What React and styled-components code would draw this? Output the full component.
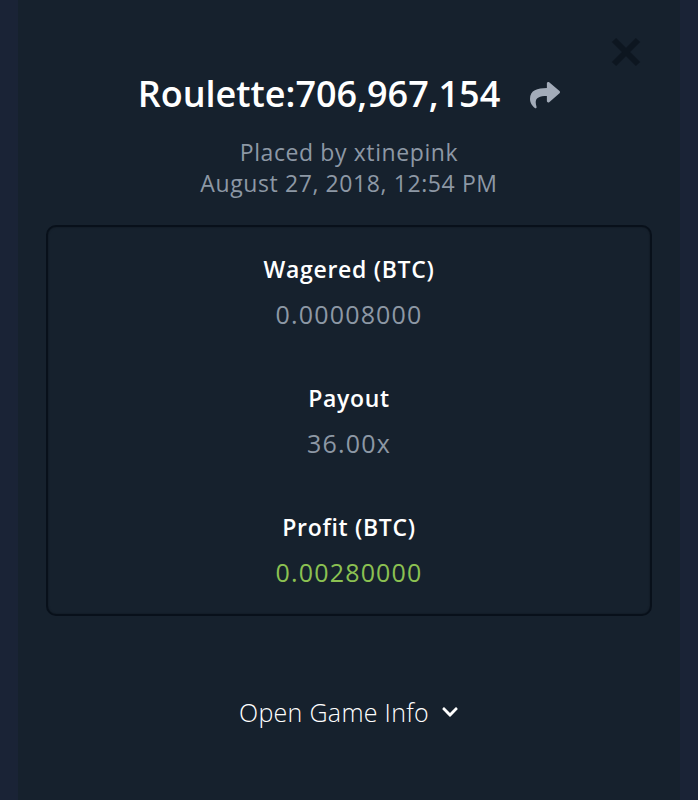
import styled, { createGlobalStyle } from 'styled-components';
import { FaShare, FaChevronDown } from 'react-icons/fa';

const GlobalStyles = createGlobalStyle`
  html, body {
    margin: 0;
    padding: 0;
    background-color: #1a2336;
  }
  * {
    box-sizing: border-box;
  }
`;

const Page = styled.div`
  width: 100%;
  height: 800px;
  padding: 0 18px;
  background-color: #1a2336;
  font-family: 'Open Sans', 'Lato', sans-serif;
`;

const Panel = styled.div`
  position: relative;
  height: 100%;
  background-color: #16212d;
  display: flex;
  flex-direction: column;
  align-items: center;
  padding: 70px 28px 0;
`;

const CloseButton = styled.button`
  position: absolute;
  top: 34px;
  right: 36px;
  width: 36px;
  height: 36px;
  padding: 0;
  border: none;
  background: none;
  cursor: pointer;
`;

const TitleRow = styled.div`
  display: flex;
  align-items: center;
  gap: 30px;
  height: 46px;
`;

const Title = styled.h1`
  margin: 0;
  color: #ffffff;
  font-size: 36px;
  font-weight: 600;
`;

const ShareIcon = styled(FaShare)`
  color: #a3acb9;
  font-size: 30px;
  margin-top: 4px;
`;

const Meta = styled.div`
  margin-top: 21px;
  color: #8d98a5;
  font-size: 23px;
  line-height: 31px;
  letter-spacing: 0.6px;
  text-align: center;
`;

const StatsBox = styled.div`
  margin-top: 26px;
  width: 100%;
  border: 2px solid #08101a;
  border-radius: 10px;
  box-shadow: inset 0 0 2px rgba(0, 0, 0, 0.4);
  padding: 28px 0 28px;
  display: flex;
  flex-direction: column;
  align-items: center;
  gap: 56px;
`;

const Stat = styled.div`
  display: flex;
  flex-direction: column;
  align-items: center;
  gap: 17px;
`;

const StatLabel = styled.div`
  color: #ffffff;
  font-size: 23px;
  line-height: 28px;
  font-weight: 600;
  letter-spacing: 0.7px;
`;

const StatValue = styled.div`
  color: ${(p) => (p.$positive ? '#8cc152' : '#8d98a5')};
  font-size: 25px;
  line-height: 28px;
  letter-spacing: 1.2px;
`;

const InfoToggle = styled.button`
  margin-top: 81px;
  padding: 0;
  display: flex;
  align-items: center;
  gap: 12px;
  border: none;
  background: none;
  color: #ffffff;
  font-family: inherit;
  font-size: 25px;
  font-weight: 300;
  line-height: 30px;
  letter-spacing: 0.3px;
  cursor: pointer;
`;

const Chevron = styled(FaChevronDown)`
  font-size: 18px;
`;

const stats = [
  { label: 'Wagered (BTC)', value: '0.00008000' },
  { label: 'Payout', value: '36.00x' },
  { label: 'Profit (BTC)', value: '0.00280000', positive: true },
];

export default function App() {
  return (
    <Page>
      <GlobalStyles />
      <Panel>
        <CloseButton aria-label="Close">
          <svg width="36" height="36" viewBox="0 0 36 36">
            <path d="M6 6 L30 30 M30 6 L6 30" stroke="#0d1620" strokeWidth="6" />
          </svg>
        </CloseButton>
        <TitleRow>
          <Title>Roulette:706,967,154</Title>
          <ShareIcon />
        </TitleRow>
        <Meta>
          Placed by xtinepink
          <br />
          August 27, 2018, 12:54 PM
        </Meta>
        <StatsBox>
          {stats.map((s) => (
            <Stat key={s.label}>
              <StatLabel>{s.label}</StatLabel>
              <StatValue $positive={s.positive}>{s.value}</StatValue>
            </Stat>
          ))}
        </StatsBox>
        <InfoToggle>
          Open Game Info <Chevron />
        </InfoToggle>
      </Panel>
    </Page>
  );
}
